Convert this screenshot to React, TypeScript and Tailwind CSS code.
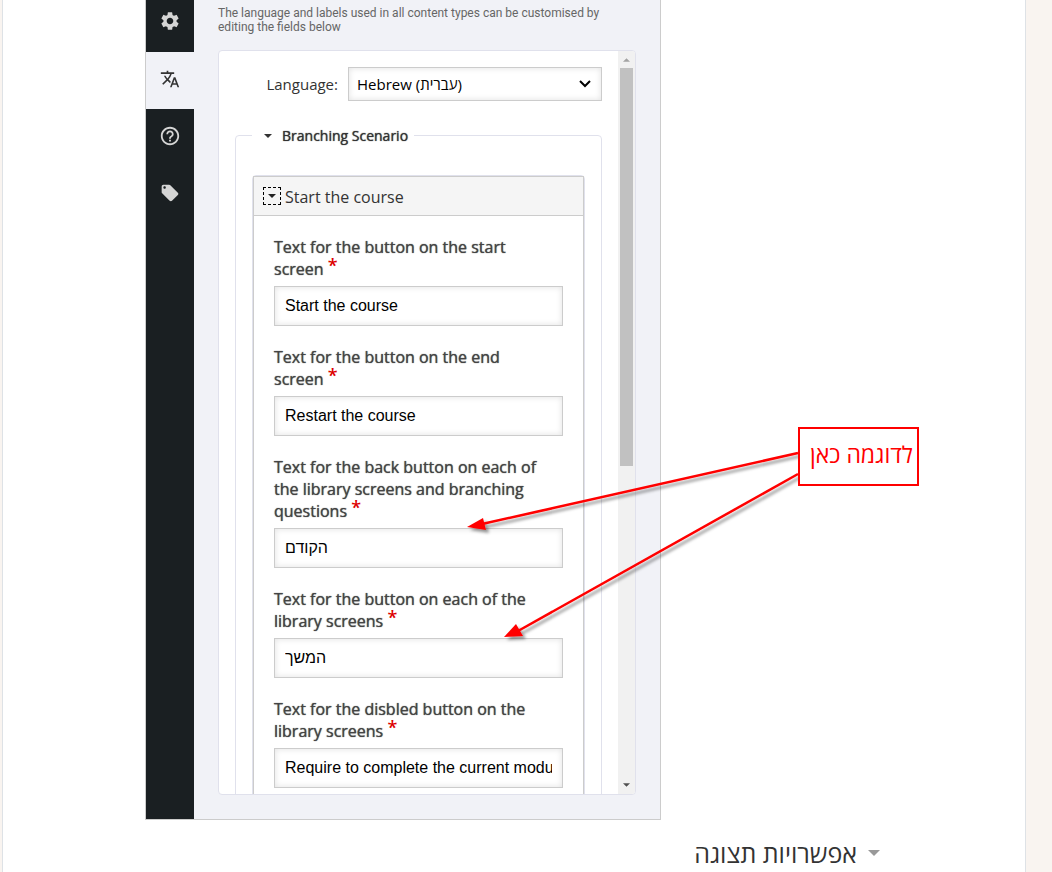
import { useState } from "react"
import type { IconType } from "react-icons"
import { MdHelpOutline, MdLocalOffer, MdSettings, MdTranslate } from "react-icons/md"

type Field = {
  id: string
  label: string
  value: string
}

const fields: Field[] = [
  { id: "start", label: "Text for the button on the start screen", value: "Start the course" },
  { id: "end", label: "Text for the button on the end screen", value: "Restart the course" },
  {
    id: "back",
    label: "Text for the back button on each of the library screens and branching questions",
    value: "הקודם",
  },
  { id: "proceed", label: "Text for the button on each of the library screens", value: "המשך" },
  {
    id: "disabled",
    label: "Text for the disbled button on the library screens",
    value: "Require to complete the current module",
  },
]

const tabs: { name: string; icon: IconType; size: string }[] = [
  { name: "Translations", icon: MdTranslate, size: "size-5" },
  { name: "Help", icon: MdHelpOutline, size: "size-[22px]" },
  { name: "Metadata", icon: MdLocalOffer, size: "size-5" },
]

function Caret({ className }: { className: string }) {
  return (
    <svg viewBox="0 0 8 4" className={className} fill="currentColor" aria-hidden="true">
      <path d="M0 0h8L4 4z" />
    </svg>
  )
}

function Sidebar() {
  const [active, setActive] = useState("Translations")

  return (
    <nav className="flex w-12 shrink-0 flex-col bg-[#1a1f22] text-[#d5d5d5]">
      <button aria-label="Settings" className="flex h-[52px] justify-center pt-[10px]">
        <MdSettings className="size-[22px]" />
      </button>
      {tabs.map(({ name, icon: Icon, size }) => (
        <button
          key={name}
          aria-label={name}
          onClick={() => setActive(name)}
          className={
            active === name
              ? "flex h-[57px] items-center justify-center bg-[#f1f2f7] pb-1 text-[#333]"
              : "flex h-[57px] items-center justify-center pb-1"
          }
        >
          <Icon className={size} />
        </button>
      ))}
    </nav>
  )
}

function TextField({ field }: { field: Field }) {
  return (
    <div>
      <label
        htmlFor={field.id}
        className="block text-base leading-[22px] text-[#444] [text-shadow:0_0_1px_#444]"
      >
        {field.label}&nbsp;
        <span className="align-[3px] text-lg leading-[12px] font-semibold text-[#d00] [text-shadow:none]">*</span>
      </label>
      <input
        id={field.id}
        type="text"
        defaultValue={field.value}
        className="mt-[6px] block h-10 w-full border border-[#ccc] bg-white px-[10px] font-['Liberation_Sans',sans-serif] text-base text-black shadow-[inset_0_0_6px_rgba(0,0,0,0.12)]"
      />
    </div>
  )
}

function Scrollbar() {
  return (
    <div className="flex w-[17px] shrink-0 flex-col items-center bg-[#f1f1f1]">
      <div className="flex h-[17px] items-center">
        <Caret className="h-1 w-[7px] rotate-180 text-[#a3a3a3]" />
      </div>
      <div className="h-[398px] w-[13px] bg-[#c1c1c1]" />
      <div className="mt-auto flex h-[19px] items-center">
        <Caret className="h-1 w-[7px] text-[#505050]" />
      </div>
    </div>
  )
}

function TranslationForm() {
  return (
    <div className="flex h-[745px] overflow-hidden rounded border border-[#e0e1ec] bg-white">
      <div className="min-w-0 flex-1 overflow-hidden p-4">
        <div className="flex items-center justify-end gap-[10px]">
          <label htmlFor="language" className="text-[15px] text-[#333]">
            Language:
          </label>
          <div className="relative w-[254px]">
            <select
              id="language"
              className="block h-[34px] w-full appearance-none border border-[#ccc] bg-white px-2 text-[15px] text-black shadow-[inset_0_0_6px_rgba(0,0,0,0.12)]"
            >
              <option>Hebrew (עברית)</option>
            </select>
            <svg
              viewBox="0 0 12 8"
              className="pointer-events-none absolute top-[13px] right-[11px] h-2 w-3"
              fill="none"
              stroke="#000"
              strokeWidth="2"
              aria-hidden="true"
            >
              <path d="M1 1l5 5 5-5" />
            </svg>
          </div>
        </div>

        <fieldset className="mt-6 rounded border border-[#e0e1ec] px-4 pb-4">
          <legend className="pr-[6px] pl-3">
            <button className="flex h-[21px] items-center gap-[10px] text-sm text-[#333] [text-shadow:0_0_1px_#333]">
              <Caret className="h-1 w-2" />
              Branching Scenario
            </button>
          </legend>
          <div className="mt-[29px] rounded-sm border border-[#e0e1ec]">
            <div className="border border-[#ccc]">
              <div className="flex h-[39px] items-center gap-1 border-b border-[#ccc] bg-[#f5f5f5] pl-[9px]">
                <button
                  aria-label="Collapse"
                  className="flex size-[18px] items-center justify-center border border-dashed border-black text-[#222]"
                >
                  <Caret className="h-1 w-2" />
                </button>
                <span className="pt-px text-base text-[#333]">Start the course</span>
              </div>
              <div className="flex flex-col gap-5 p-5">
                {fields.map((field) => (
                  <TextField key={field.id} field={field} />
                ))}
              </div>
            </div>
          </div>
        </fieldset>
      </div>
      <Scrollbar />
    </div>
  )
}

// Arrows and the callout float over the editor
function Annotation() {
  return (
    <div className="pointer-events-none absolute top-0 left-0 text-[#f00]">
      <svg width="920" height="660" className="absolute top-0 left-0 max-w-none" aria-hidden="true">
        <defs>
          <filter id="shadow" x="-10%" y="-10%" width="120%" height="130%">
            <feDropShadow dx="3" dy="3" stdDeviation="1.5" floodColor="#000" floodOpacity="0.4" />
          </filter>
        </defs>
        <g filter="url(#shadow)" stroke="currentColor" fill="currentColor">
          <path d="M798 453L482 524" strokeWidth="2.5" />
          <path d="M467 527l16-9 3 12z" stroke="none" />
          <path d="M798 474L518 631" strokeWidth="2.5" />
          <path d="M504 637l12-13 7 12z" stroke="none" />
        </g>
      </svg>
      <div
        dir="rtl"
        className="absolute top-[427px] left-[798px] flex h-[59px] w-[121px] items-center border-2 border-current bg-white pr-1 pb-1 text-[23px] whitespace-nowrap"
      >
        לדוגמה כאן
      </div>
    </div>
  )
}

export default function App() {
  return (
    <div className="relative min-h-screen overflow-hidden bg-[#f9f4f0] pr-[26px] pl-[2px] font-['Open_Sans',sans-serif]">
      <main className="min-h-screen border-x border-[#dee2e6] bg-white pr-[145px] pl-[142px]">
        <section className="flex w-[516px] border border-t-0 border-[#ccc] bg-[#f1f2f7]">
          <Sidebar />
          <div className="min-w-0 flex-1 px-6 pt-[6px] pb-6">
            <p className="mb-4 font-[Roboto,sans-serif] text-xs leading-[14px] text-[#666]">
              The language and labels used in all content types can be customised by editing the fields below
            </p>
            <TranslationForm />
          </div>
        </section>
        <h3 dir="rtl" className="mt-[17px] text-[25px] leading-8 text-[#333]">
          <button className="flex items-center gap-[11px]">
            <Caret className="h-[6px] w-3 text-[#999]" />
            אפשרויות תצוגה
          </button>
        </h3>
      </main>
      <Annotation />
    </div>
  )
}
